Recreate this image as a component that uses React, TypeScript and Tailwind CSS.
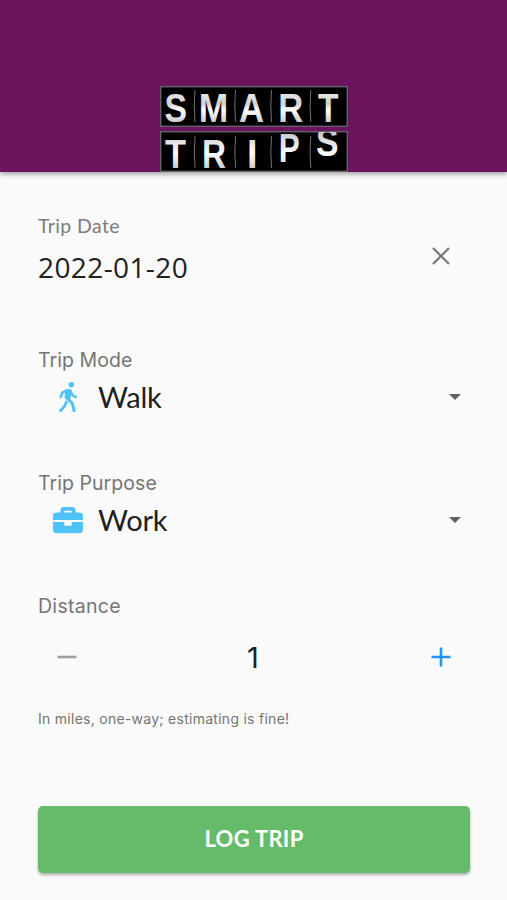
import type { ReactNode } from "react";
import { FaBriefcase } from "react-icons/fa";

type Letter = { ch: string; x: number; y: number; w: number };

const topLetters: Letter[] = [
  { ch: "S", x: 4.5, y: 35.9, w: 22.5 },
  { ch: "M", x: 38.8, y: 35.9, w: 29.5 },
  { ch: "A", x: 79, y: 35.9, w: 25 },
  { ch: "R", x: 118.3, y: 35.9, w: 25 },
  { ch: "T", x: 158, y: 35.9, w: 20.5 },
];

const bottomLetters: Letter[] = [
  { ch: "T", x: 5, y: 81.7, w: 21 },
  { ch: "R", x: 42, y: 81.7, w: 24 },
  { ch: "I", x: 87, y: 81.7, w: 10.5 },
  { ch: "P", x: 118.8, y: 75.7, w: 21 },
  { ch: "S", x: 156, y: 70, w: 22.5 },
];

function Logo() {
  return (
    <svg width="188" height="86" viewBox="0 0 188 86" aria-label="Smart Trips">
      <defs>
        <linearGradient id="metalTop" gradientUnits="userSpaceOnUse" x1="0" y1="6" x2="0" y2="36">
          <stop offset="0" stopColor="#e8e8e8" />
          <stop offset="0.4" stopColor="#d2d2d2" />
          <stop offset="0.6" stopColor="#fff" />
          <stop offset="1" stopColor="#cccccc" />
        </linearGradient>
        <linearGradient id="metalBottom" gradientUnits="userSpaceOnUse" x1="0" y1="46" x2="0" y2="82">
          <stop offset="0" stopColor="#c8c8c8" />
          <stop offset="0.4" stopColor="#ececec" />
          <stop offset="0.6" stopColor="#fff" />
          <stop offset="1" stopColor="#cccccc" />
        </linearGradient>
        <clipPath id="panels">
          <path d="M1 1h186v39H1zM1 46h186v39H1z" />
        </clipPath>
      </defs>
      <rect x="0.75" y="0.75" width="186.5" height="39.5" fill="#000" stroke="#6b6870" strokeWidth="1.3" />
      <rect x="0.75" y="45.75" width="186.5" height="39.5" fill="#000" stroke="#6b6870" strokeWidth="1.3" />
      {[34.5, 75, 111, 150.3].map((x) => (
        <g key={x} fill="none" stroke="#7d7d7d" strokeWidth="0.9">
          <path d={`M${x + 0.5} 4Q${x - 1} 20 ${x + 0.5} 36`} />
          <path d={`M${x + 0.5} 50Q${x - 1} 66 ${x + 0.5} 82`} />
        </g>
      ))}
      <g clipPath="url(#panels)" className="font-['Liberation_Sans',Arial,sans-serif] text-[41px] font-bold">
        {topLetters.map((l) => (
          <text key={l.x} x={l.x} y={l.y} textLength={l.w} lengthAdjust="spacingAndGlyphs" fill="url(#metalTop)">
            {l.ch}
          </text>
        ))}
        {bottomLetters.map((l) => (
          <text key={l.x} x={l.x} y={l.y} textLength={l.w} lengthAdjust="spacingAndGlyphs" fill="url(#metalBottom)">
            {l.ch}
          </text>
        ))}
      </g>
    </svg>
  );
}

function Walker() {
  return (
    <svg width="18.7" height="30.7" viewBox="26 20 56 92" fill="none" stroke="currentColor" strokeLinecap="round" strokeLinejoin="round">
      <circle cx="63" cy="28.5" r="8.3" fill="currentColor" stroke="none" />
      <path d="M48 46L60 46L56 70L47 67Z" fill="currentColor" strokeWidth="8" />
      <path d="M48 46L36 52L31 65" strokeWidth="7.5" />
      <path d="M60 47L67 60L77 65" strokeWidth="7.5" />
      <path d="M48 80L43 92L31 106" strokeWidth="8.5" />
      <path d="M52 70L66 84L71 106" strokeWidth="9" />
    </svg>
  );
}

function Caret() {
  return (
    <svg width="12" height="6" viewBox="0 0 12 6" className="mr-2">
      <path d="M0 0h12L6 6z" fill="#616161" />
    </svg>
  );
}

function Select({ label, icon, value }: { label: string; icon: ReactNode; value: string }) {
  return (
    <section className="h-[123px]">
      <div className="h-6 font-[Inter,sans-serif] text-[19.5px] leading-6 tracking-[0.05px] text-[#757575]">{label}</div>
      <div className="flex h-[50px] items-center">
        <span className="flex w-[60px] justify-center text-[30px] text-[#4fc3f7]">{icon}</span>
        <span className="flex-1 font-[Lato,sans-serif] text-[29px] leading-9 tracking-[-0.2px] text-[#212121]">{value}</span>
        <Caret />
      </div>
    </section>
  );
}

export default function App() {
  return (
    <div className="flex h-[900px] w-[507px] flex-col bg-[#fafafa]">
      <header className="flex h-[172px] shrink-0 items-end justify-center bg-[#6b155f] shadow-[0_2px_5px_rgba(0,0,0,0.38)]">
        <Logo />
      </header>
      <main className="flex flex-col px-[38px] pt-[42px]">
        <section className="flex h-[134px] justify-between">
          <div>
            <div className="h-6 font-[Lato,sans-serif] text-[19.5px] leading-6 tracking-[0.4px] text-[#7c7c7c]">Trip Date</div>
            <div className="mt-[11px] h-9 font-['Open_Sans',sans-serif] text-[28px] leading-9 tracking-[0.4px] text-[#212121]">2022-01-20</div>
          </div>
          <svg width="18" height="18" viewBox="0 0 18 18" className="mt-[33px] mr-[19px]">
            <path d="M1 1l16 16M17 1L1 17" stroke="#7c7c7c" strokeWidth="2.3" />
          </svg>
        </section>
        <Select label="Trip Mode" icon={<Walker />} value="Walk" />
        <Select label="Trip Purpose" icon={<FaBriefcase />} value="Work" />
        <section className="h-[212px]">
          <div className="h-6 font-[Inter,sans-serif] text-[19.5px] leading-6 tracking-[0.3px] text-[#757575]">Distance</div>
          <div className="mt-[19px] flex h-10 items-center justify-between pr-[18px] pl-[19px]">
            <svg width="20" height="20" viewBox="0 0 20 20">
              <path d="M0.5 10h19" stroke="#9e9e9e" strokeWidth="2.6" />
            </svg>
            <span className="pt-0.5 pr-0.5 font-[Inter,sans-serif] text-[29px] leading-9 text-[#212121]">1</span>
            <svg width="20" height="20" viewBox="0 0 20 20">
              <path d="M0.5 10h19M10 0.5v19" stroke="#2196f3" strokeWidth="2.6" />
            </svg>
          </div>
          <div className="mt-8 font-[Inter,sans-serif] text-[14px] leading-5 tracking-[0.27px] text-[#757575]">
            In miles, one-way; estimating is fine!
          </div>
        </section>
        <button className="h-[67px] w-[432px] rounded-[5px] bg-[#66bb6a] pb-0.5 font-[Lato,sans-serif] text-[22px] font-bold tracking-[0.3px] text-white shadow-[0_2px_3px_rgba(0,0,0,0.3)]">
          LOG TRIP
        </button>
      </main>
    </div>
  );
}
